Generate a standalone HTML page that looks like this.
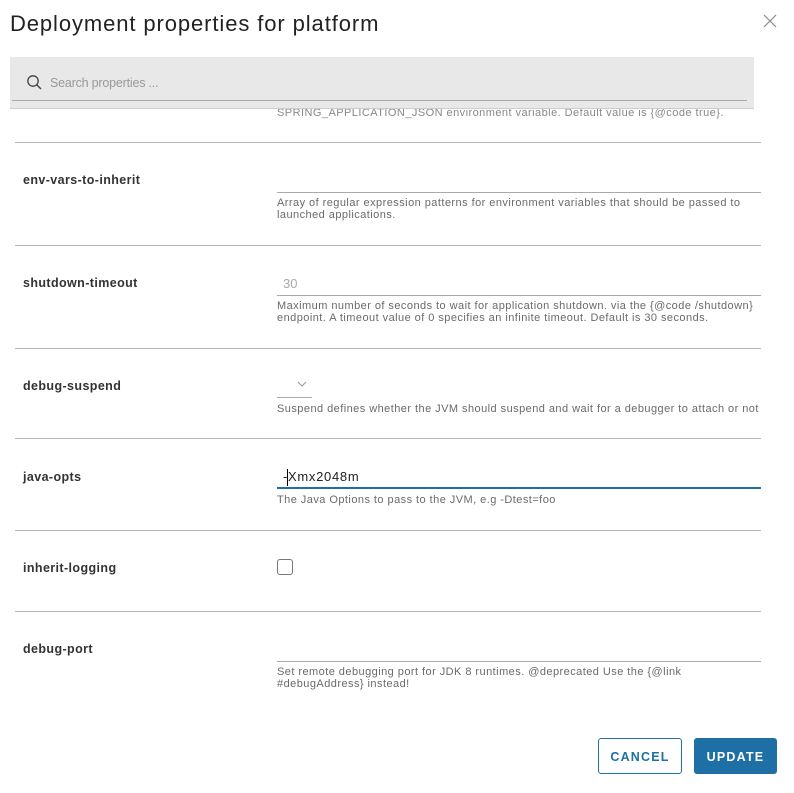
<!DOCTYPE html>
<html><head><meta charset="utf-8"><style>
*{margin:0;padding:0;box-sizing:border-box}
body{width:794px;height:793px;background:#fff;font-family:"Liberation Sans",sans-serif;position:relative;overflow:hidden;color:#333}
.a{position:absolute;white-space:nowrap}
.hr{position:absolute;left:15px;width:746px;height:1px;background:#b5b5b5}
.lbl{position:absolute;left:23px;font-size:12.5px;font-weight:bold;color:#333;letter-spacing:0.4px}
.ul{position:absolute;left:277px;width:484px;height:1px;background:#aaa}
.d{position:absolute;left:277px;font-size:11px;color:#6a6a6a;line-height:12px;white-space:nowrap;letter-spacing:0.45px}
</style></head><body>
<div class="a" style="left:10px;top:11px;font-size:22px;color:#222;letter-spacing:0.9px">Deployment properties for platform</div>
<svg class="a" style="left:763px;top:14px" width="14" height="14"><path d="M1 1L13 13M13 1L1 13" stroke="#888" stroke-width="1.2"/></svg>
<div class="d" style="top:107px;color:#888">SPRING_APPLICATION_JSON environment variable. Default value is {@code true}.</div>
<div class="a" style="left:10px;top:57px;width:744px;height:52px;background:#e8e8e8;border-bottom:1px solid #ccc"></div>
<div class="a" style="left:12px;top:100px;width:735px;height:1px;background:#aaa"></div>
<svg class="a" style="left:26px;top:74px" width="16" height="16"><circle cx="7" cy="7" r="5.2" fill="none" stroke="#444" stroke-width="1.3"/><path d="M11 11L15 15" stroke="#444" stroke-width="1.4"/></svg>
<div class="a" style="left:50px;top:76px;font-size:12.5px;color:#999;letter-spacing:-0.2px">Search properties ...</div>

<div class="hr" style="top:142px"></div>
<div class="lbl" style="top:173px">env-vars-to-inherit</div>
<div class="ul" style="top:192px"></div>
<div class="d" style="top:197px">Array of regular expression patterns for environment variables that should be passed to<br>launched applications.</div>

<div class="hr" style="top:245px"></div>
<div class="lbl" style="top:276px">shutdown-timeout</div>
<div class="a" style="left:283px;top:276px;font-size:13px;color:#aaa">30</div>
<div class="ul" style="top:295px"></div>
<div class="d" style="top:300px">Maximum number of seconds to wait for application shutdown. via the {@code /shutdown}<br>endpoint. A timeout value of 0 specifies an infinite timeout. Default is 30 seconds.</div>

<div class="hr" style="top:348px"></div>
<div class="lbl" style="top:379px">debug-suspend</div>
<svg class="a" style="left:297px;top:381px" width="10" height="6"><path d="M1 1L5 5L9 1" fill="none" stroke="#999" stroke-width="1"/></svg>
<div class="a" style="left:277px;top:397px;width:35px;height:1px;background:#aaa"></div>
<div class="d" style="top:403px">Suspend defines whether the JVM should suspend and wait for a debugger to attach or not</div>

<div class="hr" style="top:438px"></div>
<div class="lbl" style="top:470px">java-opts</div>
<div class="a" style="left:283px;top:469px;font-size:13px;color:#222;letter-spacing:0.7px">-Xmx2048m</div>
<div class="a" style="left:287px;top:469px;width:1px;height:17px;background:#000"></div>
<div class="a" style="left:277px;top:487px;width:484px;height:2px;background:#1d6fa5"></div>
<div class="d" style="top:494px">The Java Options to pass to the JVM, e.g -Dtest=foo</div>

<div class="hr" style="top:530px"></div>
<div class="lbl" style="top:561px">inherit-logging</div>
<div class="a" style="left:277px;top:559px;width:16px;height:16px;border:1px solid #777;border-radius:3px"></div>

<div class="hr" style="top:611px"></div>
<div class="lbl" style="top:642px">debug-port</div>
<div class="ul" style="top:661px"></div>
<div class="d" style="top:666px">Set remote debugging port for JDK 8 runtimes. @deprecated Use the {@link<br>#debugAddress} instead!</div>

<div class="a" style="left:598px;top:738px;width:84px;height:36px;border:1px solid #1d6fa5;border-radius:3px;color:#1d6fa5;font-size:12.5px;font-weight:bold;letter-spacing:1.2px;text-align:center;line-height:36px">CANCEL</div>
<div class="a" style="left:694px;top:738px;width:83px;height:36px;background:#1d6fa5;border-radius:3px;color:#fff;font-size:12.5px;font-weight:bold;letter-spacing:1.2px;text-align:center;line-height:38px">UPDATE</div>
</body></html>
